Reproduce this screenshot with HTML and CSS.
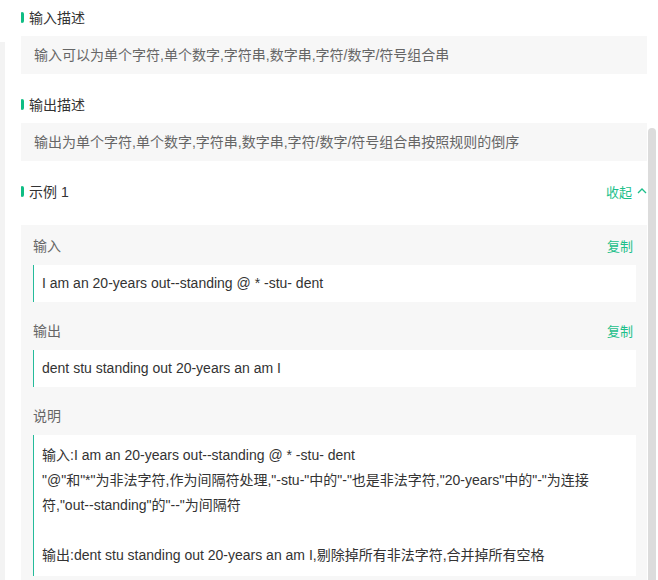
FILE: index.html
```html
<!DOCTYPE html>
<html lang="zh-CN">
<head>
<meta charset="utf-8">
<title>题目描述</title>
<link rel="stylesheet" href="styles.css">
</head>
<body>
<div class="page">
  <div class="side-strip"></div>
  <main class="content">
    <section class="block">
      <h3 class="title"><span class="mark"></span>输入描述</h3>
      <div class="desc">输入可以为单个字符,单个数字,字符串,数字串,字符/数字/符号组合串</div>
    </section>
    <section class="block">
      <h3 class="title"><span class="mark"></span>输出描述</h3>
      <div class="desc">输出为单个字符,单个数字,字符串,数字串,字符/数字/符号组合串按照规则的倒序</div>
    </section>
    <section class="block example-block">
      <div class="title-row">
        <h3 class="title"><span class="mark"></span>示例 1</h3>
        <span class="toggle">收起<svg class="chev" width="10" height="7" viewBox="0 0 10 7"><path d="M1 6 L5 2 L9 6" fill="none" stroke="currentColor" stroke-width="1.3"/></svg></span>
      </div>
      <div class="example">
        <div class="ex-label"><span>输入</span><span class="copy">复制</span></div>
        <div class="ex-box">I am an 20-years out--standing @ * -stu- dent</div>
        <div class="ex-label"><span>输出</span><span class="copy">复制</span></div>
        <div class="ex-box">dent stu standing out 20-years an am I</div>
        <div class="ex-label"><span>说明</span></div>
        <div class="ex-box explain">输入:I am an 20-years out--standing @ * -stu- dent<br>"@"和"*"为非法字符,作为间隔符处理,"-stu-"中的"-"也是非法字符,"20-years"中的"-"为连接符,"out--standing"的"--"为间隔符<br><br>输出:dent stu standing out 20-years an am I,剔除掉所有非法字符,合并掉所有空格</div>
      </div>
    </section>
  </main>
  <div class="scroll-track"><div class="scroll-thumb"></div></div>
</div>
</body>
</html>
```

FILE: styles.css
```css
html, body {
  margin: 0;
  padding: 0;
  overflow: hidden;
  background: #fff;
}
body {
  font-family: "Liberation Sans", "Noto Sans CJK SC", sans-serif;
  font-size: 14px;
  color: #333;
}
.page {
  display: flex;
  height: 580px;
  overflow: hidden;
}
.side-strip {
  width: 5px;
  flex: none;
  margin-top: 42px;
  background: #f3f3f3;
}
.content {
  flex: 1;
  min-width: 0;
  padding: 7px 1px 0 16px;
}
.block + .block {
  margin-top: 20px;
}
.title {
  margin: 0;
  display: flex;
  align-items: center;
  height: 20px;
  font-size: 14px;
  font-weight: normal;
  color: #333;
}
.mark {
  width: 3px;
  height: 11px;
  background: #0fbd84;
  border-radius: 1px 2px 2px 1px;
  margin-right: 5px;
}
.desc {
  margin-top: 9px;
  background: #f7f7f7;
  color: #666;
  line-height: 22px;
  padding: 8px 13px;
}
.example-block {
  margin-top: 20px;
}
.title-row {
  display: flex;
  justify-content: space-between;
  align-items: center;
}
.toggle {
  display: flex;
  align-items: center;
  gap: 5px;
  color: #1cbf8a;
  font-size: 13px;
  margin-left: 1px;
}
.chev {
  margin-top: -2px;
}
.example {
  margin-top: 24px;
  background: #f7f7f7;
  padding: 10px 11px 12px 12px;
}
.ex-label {
  display: flex;
  justify-content: space-between;
  align-items: center;
  height: 20px;
  color: #666;
}
.ex-label + .ex-box {
  margin-top: 10px;
}
.ex-box + .ex-label {
  margin-top: 18px;
}
.copy {
  color: #1cbf8a;
  font-size: 13px;
  margin-right: 3px;
}
.ex-box {
  background: #fff;
  border-left: 1px solid #25bb9b;
  padding: 7px 12px 7px 8px;
  line-height: 23px;
  color: #333;
}
.ex-box.explain {
  padding-top: 8px;
  padding-bottom: 8px;
  line-height: 25px;
}
.scroll-track {
  width: 10px;
  flex: none;
  display: flex;
  flex-direction: column;
}
.scroll-thumb {
  margin-top: 128px;
  width: 8px;
  flex: 1;
  background: #dcdcdc;
  border-radius: 4px 4px 0 0;
}
```
